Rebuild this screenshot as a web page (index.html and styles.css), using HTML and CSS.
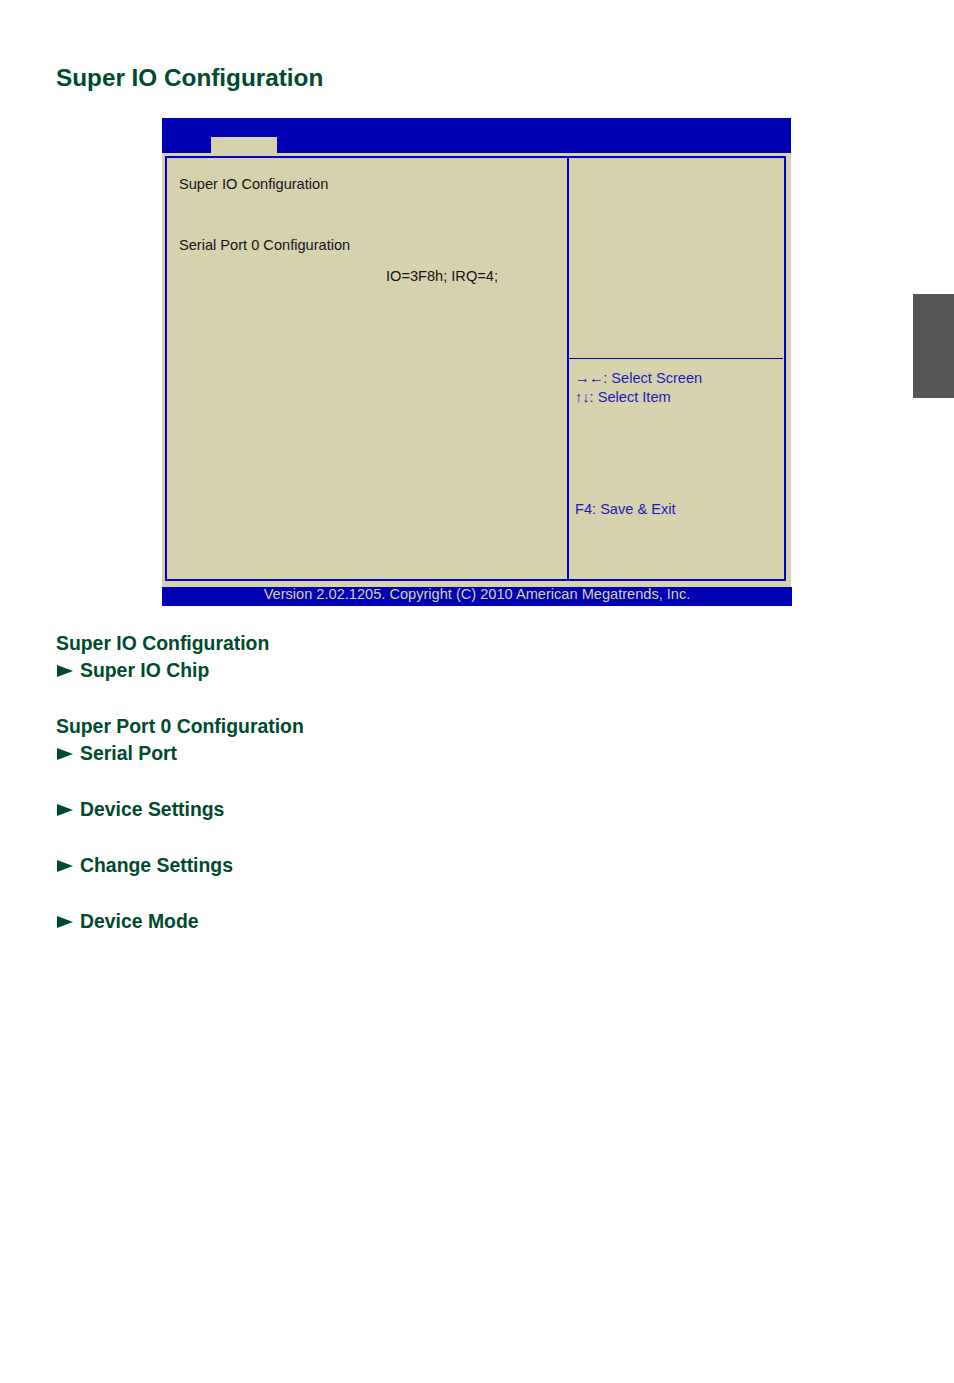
FILE: index.html
```html
<!DOCTYPE html>
<html>
<head>
<meta charset="utf-8">
<link rel="stylesheet" href="styles.css">
</head>
<body>
<div class="page">
  <h1 class="title">Super IO Configuration</h1>
  <div class="bios">
    <div class="topbar"><div class="tab"></div></div>
    <div class="frame">
      <div class="main">
        <div class="left">
          <div class="line l1">Super IO Configuration</div>
          <div class="line l2">Serial Port 0 Configuration</div>
          <div class="line l3">IO=3F8h; IRQ=4;</div>
        </div>
        <div class="right">
          <div class="help"></div>
          <div class="keys">
            <div class="key"><span class="harr">→←</span>: Select Screen</div>
            <div class="key">↑↓: Select Item</div>
            <div class="key k3">F4: Save &amp; Exit</div>
          </div>
        </div>
      </div>
    </div>
    <div class="footer">Version 2.02.1205. Copyright (C) 2010 American Megatrends, Inc.</div>
  </div>
  <div class="list">
    <div class="group">
      <div class="head">Super IO Configuration</div>
      <div class="item"><svg class="tri" width="16" height="12" viewBox="0 0 16 12"><polygon points="0,0 16,6 0,12"/></svg>Super IO Chip</div>
    </div>
    <div class="group">
      <div class="head">Super Port 0 Configuration</div>
      <div class="item"><svg class="tri" width="16" height="12" viewBox="0 0 16 12"><polygon points="0,0 16,6 0,12"/></svg>Serial Port</div>
    </div>
    <div class="group">
      <div class="item"><svg class="tri" width="16" height="12" viewBox="0 0 16 12"><polygon points="0,0 16,6 0,12"/></svg>Device Settings</div>
    </div>
    <div class="group">
      <div class="item"><svg class="tri" width="16" height="12" viewBox="0 0 16 12"><polygon points="0,0 16,6 0,12"/></svg>Change Settings</div>
    </div>
    <div class="group">
      <div class="item"><svg class="tri" width="16" height="12" viewBox="0 0 16 12"><polygon points="0,0 16,6 0,12"/></svg>Device Mode</div>
    </div>
  </div>
  <div class="sidetab"></div>
</div>
</body>
</html>
```

FILE: styles.css
```css
html, body {
  margin: 0;
  padding: 0;
  background: #ffffff;
}
.page {
  position: relative;
  width: 954px;
  height: 1383px;
  font-family: "Liberation Sans", Arial, sans-serif;
  overflow: hidden;
}
.title {
  margin: 64px 0 0 56px;
  font-size: 24.3px;
  line-height: 28px;
  font-weight: bold;
  color: #004a2e;
}
.bios {
  margin: 26px 0 0 162px;
  width: 629px;
  background: #d6d2ad;
}
.topbar {
  height: 35px;
  background: #0000b4;
  display: flex;
  align-items: flex-end;
}
.tab {
  margin-left: 49px;
  width: 66px;
  height: 16px;
  background: #d6d2ad;
}
.frame {
  padding: 3px 5px 6px 3px;
}
.main {
  display: flex;
  height: 421px;
  border: 2px solid #0000c8;
}
.left {
  width: 400px;
  border-right: 2px solid #0000c8;
  padding-top: 17px;
  color: #141414;
  font-size: 14.6px;
}
.line {
  line-height: 18px;
  padding-left: 12px;
}
.l2 {
  margin-top: 43px;
}
.l3 {
  margin-top: 13px;
  padding-left: 219px;
}
.right {
  flex: 1;
  display: flex;
  flex-direction: column;
}
.help {
  height: 200px;
  border-bottom: 1px solid #0000c8;
  margin-right: 1px;
}
.keys {
  padding: 10px 0 0 6px;
  color: #1c1cb4;
  font-size: 14.6px;
}
.key {
  line-height: 19px;
}
.harr {
  letter-spacing: -0.5px;
}
.k3 {
  margin-top: 93px;
}
.footer {
  height: 19px;
  width: 630px;
  background: #0000b4;
  color: #d6d2ad;
  font-size: 14.6px;
  line-height: 15px;
  text-align: center;
}
.list {
  margin: 24px 0 0 56px;
  color: #004a2e;
  font-weight: bold;
  font-size: 19.4px;
}
.group + .group {
  margin-top: 29px;
}
.head, .item {
  line-height: 27px;
}
.item {
  display: flex;
  align-items: center;
}
.tri {
  fill: #004a2e;
  margin: 0 7px 0 1px;
}
.sidetab {
  position: absolute;
  left: 913px;
  top: 294px;
  width: 41px;
  height: 104px;
  background: #555555;
}
```
